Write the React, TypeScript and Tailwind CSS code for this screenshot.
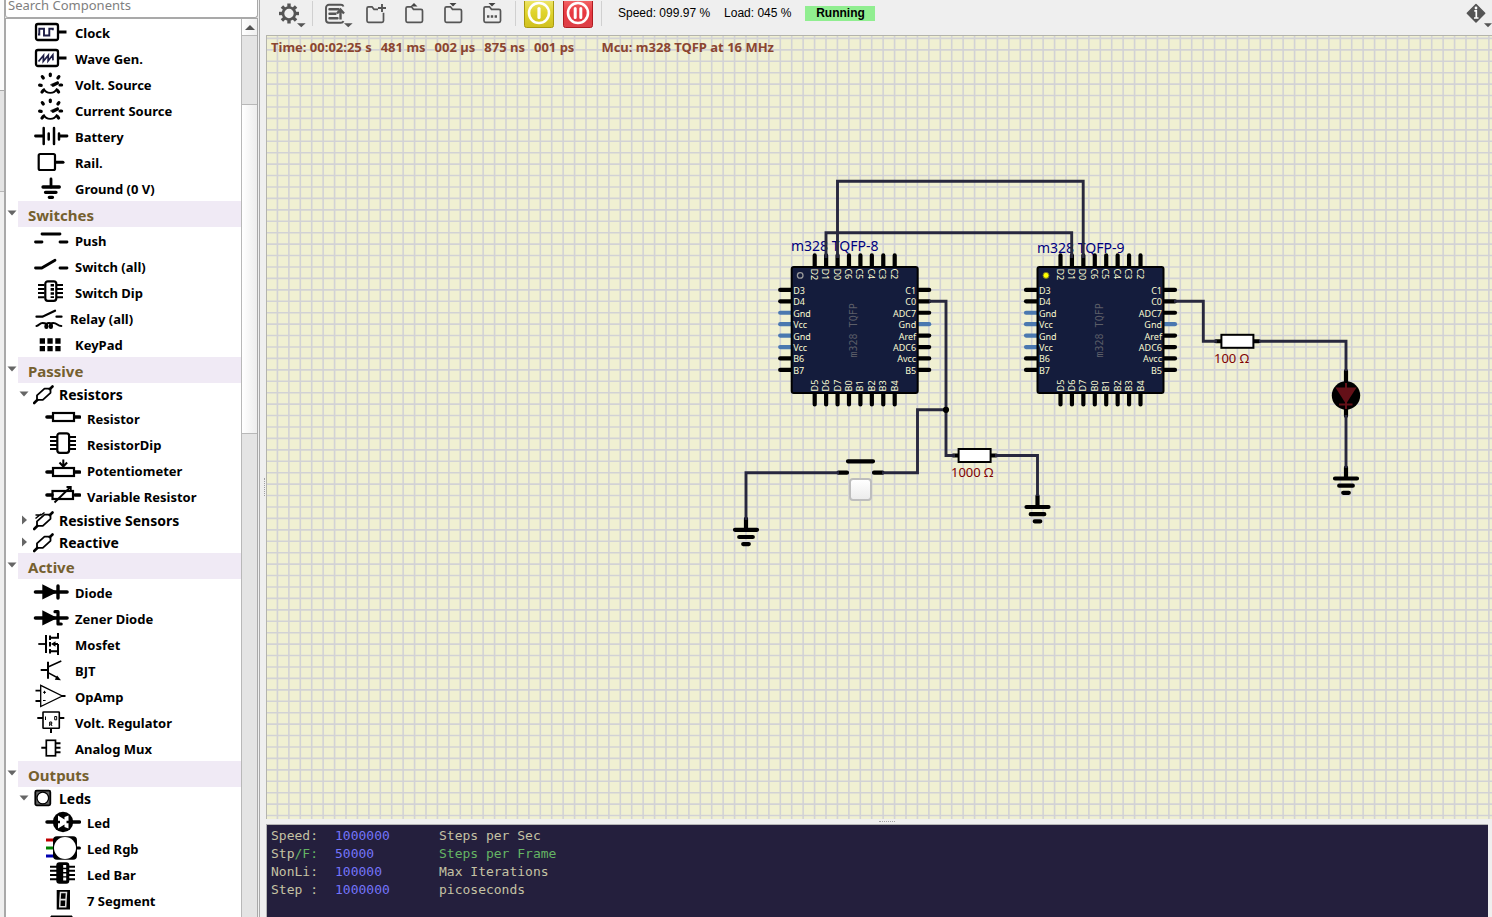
import React, { ReactNode } from "react";

/* ---------- component tree icons ---------- */

const PinLines = ({ xs, ys }: { xs: [number, number]; ys: number[] }) => (
  <path d={ys.map((y) => `M${xs[0]} ${y}H${xs[1]}`).join("")} strokeWidth={2} />
);

const dial = (
  <g>
    <path
      d="M17.3 3v1.6M9.3 5.6l1 1.4M25.9 5.6l-1 1.4M6.6 14.2l1.6.1M27 14h1.6M9 21l1.4-1.6M25.6 21l-1.2-1.6"
      strokeWidth={3.2}
      strokeLinecap="round"
    />
    <path d="M10.5 17.5c1.5 3 4 4.4 6.8 4.4s5.300-1.400 6.800-4.400" strokeWidth={1.8} />
    <path d="M17.500 14.200l8-3.400" stroke="#444" strokeWidth={2} />
    <path d="M20 14.300l4.500-2.200" strokeWidth={3} strokeLinecap="round" />
  </g>
);

const slanted = (
  <g>
    <path d="M1.200 20l3.300-3.200M16.800 6.200l2.700-2.700" strokeWidth={2.600} strokeLinecap="round" />
    <path d="M4 16.800V12.300L11.500 5.600h6V9.800L9.800 16.800z" strokeWidth={1.800} strokeLinejoin="round" />
  </g>
);

const ICONS: Record<string, ReactNode> = {
  clock: (
    <g>
      <rect x="3" y="5" width="22" height="16" rx="2" strokeWidth={2.300} />
      <path d="M25 13h8.500" strokeWidth={3} />
      <path d="M5 15.500h1.300V9.700h4.700v6.800h5.300V9.700h3.500v1.500" stroke="#1c1c44" strokeWidth={1.900} />
    </g>
  ),
  wave: (
    <g>
      <rect x="3" y="5" width="22" height="16" rx="2" strokeWidth={2.300} />
      <path d="M25 13h8.500" strokeWidth={3} />
      <path d="M5.500 16.500l5-6-.2 5.700 5-6-.2 5.700 4.700-6 .2 5.500" stroke="#1c1c44" strokeWidth={1.700} />
    </g>
  ),
  dial,
  battery: (
    <g strokeLinecap="round">
      <path d="M2.500 13H10M27 13h7" strokeWidth={2.800} />
      <path d="M10.700 5v16M21 5v16M15.700 10.500v6M26 10.500v6" strokeWidth={2.500} />
    </g>
  ),
  rail: (
    <g>
      <rect x="5.700" y="5" width="16.300" height="16" rx="1.500" strokeWidth={2.200} />
      <path d="M23 13.300h7" strokeWidth={3} strokeLinecap="round" />
    </g>
  ),
  ground: (
    <g strokeLinecap="round">
      <path d="M18 4v8" strokeWidth={2.800} />
      <path d="M10 12h16.300M12.500 17.300h10.500M16.300 22.300h3.200" strokeWidth={3.300} />
    </g>
  ),
  push: (
    <path d="M9 7h18M2.500 15H9M27 15h7" strokeWidth={2.800} strokeLinecap="round" />
  ),
  switch: (
    <path d="M2.500 15H8.700L22 7.300M27 15h7" strokeWidth={2.800} strokeLinecap="round" />
  ),
  switchDip: (
    <g>
      <PinLines xs={[5, 11.500]} ys={[6, 10, 14, 18.300]} />
      <PinLines xs={[23.500, 30]} ys={[6, 10, 14, 18.300]} />
      <rect x="12.300" y="2.300" width="11" height="19.500" rx="2.500" strokeWidth={2.200} />
      <path d="M19.300 5v14" strokeWidth={3.400} strokeDasharray="2.600 1.500" />
    </g>
  ),
  relay: (
    <g strokeLinecap="round">
      <path d="M3.500 11.700h6L22 5.700M23.500 11.700h5" strokeWidth={2.300} />
      <path
        d="M3.500 21c2.500 0 3-3 6-3s5 .5 5 3.500c0 2-2.200 2-2.200 0 0-2 1.700-3.500 3.700-3.500s3 1.500 3 3.500-2.200 2-2.200 0c0-2 1.500-3.500 3.500-3.500 4 0 4 3 8 3"
        strokeWidth={2.100}
      />
    </g>
  ),
  keypad: (
    <path
      d="M6.700 7.300h5.300v5.400h-5.300zM14.400 7.300h5.300v5.400h-5.300zM22.300 7.300h5.300v5.400h-5.300zM6.700 15h5.300v5.200h-5.300zM14.400 15h5.300v5.200h-5.300zM22.300 15h5.300v5.200h-5.300z"
      fill="#000"
      stroke="none"
    />
  ),
  slanted,
  sensors: (
    <g>
      {slanted}
      <path d="M2.500 6h5.500l3.500-2.500M8 5L2.500 9.500" strokeWidth={1.500} />
    </g>
  ),
  resistor: (
    <g>
      <path d="M2 12h5M30 12h4.500" strokeWidth={3.600} strokeLinecap="round" />
      <rect x="8" y="8" width="21" height="8" strokeWidth={2.200} />
    </g>
  ),
  resistorDip: (
    <g>
      <PinLines xs={[5, 12]} ys={[6, 10, 14, 18]} />
      <PinLines xs={[24, 31]} ys={[6, 10, 14, 18]} />
      <rect x="12.300" y="2.300" width="11.800" height="19.500" rx="2.500" strokeWidth={2.200} />
    </g>
  ),
  pot: (
    <g>
      <path d="M2 15h5M30 15h4.500" strokeWidth={3.600} strokeLinecap="round" />
      <rect x="8" y="11" width="21" height="8" strokeWidth={2.200} />
      <path d="M18.300 2.500v7M14.500 5.500l3.800 4 3.800-4" strokeWidth={2} />
    </g>
  ),
  varRes: (
    <g>
      <path d="M2 12h5M30 12h4.500" strokeWidth={3.600} strokeLinecap="round" />
      <rect x="7.500" y="8" width="20.500" height="8" strokeWidth={2.200} />
      <path d="M9.500 19.500l16-15.500M21.500 4h4.300v4" strokeWidth={1.800} />
    </g>
  ),
  diode: (
    <g>
      <path d="M2.500 13H34" strokeWidth={3.600} strokeLinecap="round" />
      <path d="M9.300 5.300L24.500 13 9.300 20.500z" fill="#000" stroke="none" />
      <path d="M25 7v12" strokeWidth={3.400} strokeLinecap="round" />
    </g>
  ),
  zener: (
    <g>
      <path d="M2.500 13H34" strokeWidth={3.600} strokeLinecap="round" />
      <path d="M9.300 5.300L24.500 13 9.300 20.500z" fill="#000" stroke="none" />
      <path d="M22 6.700h3V19h3.200" strokeWidth={3.200} strokeLinecap="round" strokeLinejoin="round" />
    </g>
  ),
  mosfet: (
    <g>
      <path d="M5.300 13h7.500" strokeWidth={1.800} />
      <path d="M13 4v18M17 4.500v4.500M17 11v4.500M17 18v4.500M17 6.700h8V2M17 20.300h8V24M25 13v7" strokeWidth={2} />
      <path d="M18 13l4.500-2.700v5.400zM22 12h3v2h-3z" fill="#000" stroke="none" />
    </g>
  ),
  bjt: (
    <g>
      <path d="M7.700 13H15M15 4.700v17" strokeWidth={2} />
      <path d="M15 10l13.300-6M15 15.700l10 5.300" strokeWidth={1.500} />
      <path d="M28 23.300l-6.200-.5 2.300-4.300z" fill="#000" stroke="none" />
    </g>
  ),
  opamp: (
    <g>
      <path d="M7.700 2.300v21.200L29.300 13z" strokeWidth={1.300} />
      <path d="M2.500 7.700h5.200M2.500 18h5.200M28 13h4.500" strokeWidth={1.800} />
      <path d="M10 9.300h3M11.500 7.800v3M10 17.500h2.600" strokeWidth={1} />
    </g>
  ),
  vreg: (
    <g>
      <rect x="10" y="3" width="16.300" height="16.300" rx=".5" strokeWidth={1.600} />
      <path d="M4.300 9H10M26 9h5.300M18 19.500v4.500" strokeWidth={2} />
      <path
        d="M12.500 7.500v3.500M21.700 7.500h2v3.300h-2zM16.700 17v-4h2v2h-2M18 15l1 2"
        strokeWidth={1}
      />
    </g>
  ),
  mux: (
    <g>
      <rect x="13.300" y="5.300" width="9.200" height="15.500" strokeWidth={1.700} />
      <path d="M8.300 12.700h5M22.500 8.300h5M22.500 12.700h5M22.500 17.300h5" strokeWidth={2} />
    </g>
  ),
  leds: (
    <g>
      <rect x="2.300" y="3.700" width="15" height="14.600" rx="1.500" fill="#666" strokeWidth={1.800} />
      <circle cx="9.800" cy="11" r="5.800" fill="#fff" strokeWidth={1.300} />
    </g>
  ),
  led: (
    <g>
      <path d="M2 13h32.500" strokeWidth={3.500} strokeLinecap="round" />
      <circle cx="18" cy="13" r="10.200" fill="#000" stroke="none" />
      <path d="M13 6.500l6.500 4V8l4-1.500v13l-4-1.500v-2.500l-6.500 4z" fill="#fff" stroke="none" />
      <path d="M9 13h6" strokeWidth={2.500} />
      <path d="M21.500 13h6" strokeWidth={2.500} />
    </g>
  ),
  rgb: (
    <g>
      <path d="M1 5h8" stroke="#c00000" strokeWidth={3} />
      <path d="M1 13h8" stroke="#008000" strokeWidth={3} />
      <path d="M1 21h8" stroke="#0000b0" strokeWidth={3} />
      <path d="M30 13h4.500" strokeWidth={3} strokeLinecap="round" />
      <rect x="8" y="1.300" width="24" height="23.400" rx="4" fill="#000" stroke="none" />
      <circle cx="20" cy="13" r="11" fill="#fff" stroke="none" />
    </g>
  ),
  ledBar: (
    <g>
      <PinLines xs={[5, 12]} ys={[5.700, 9.700, 14, 18.300]} />
      <PinLines xs={[24, 30]} ys={[5.700, 9.700, 14, 18.300]} />
      <rect x="11.300" y="1.300" width="13" height="21.400" rx="3" fill="#000" stroke="none" />
      <path d="M19.700 4v16" stroke="#fff" strokeWidth={3} strokeDasharray="2.800 1.400" />
    </g>
  ),
  seg7: (
    <g>
      <rect x="11.700" y="3" width="13.300" height="19.500" fill="#000" stroke="none" />
      <path d="M15.500 5.500h6l-.5 7h-6zM15 12.700h6l-.3 7h-6z" stroke="#ddd" strokeWidth={1.500} />
    </g>
  ),
  cut: <path d="M6 3h21v16H6z" fill="#000" />,
};

const Icon = ({ name, narrow }: { name: string; narrow?: boolean }) => (
  <svg
    className={narrow ? "h-[22px] w-[21px] shrink-0" : "h-[26px] w-9 shrink-0"}
    viewBox={narrow ? "0 0 21 22" : "0 0 36 26"}
    fill="none"
    stroke="#000"
    aria-hidden="true"
  >
    {ICONS[name]}
  </svg>
);

/* ---------- sidebar tree ---------- */

const Arrow = ({ open }: { open: boolean }) => (
  <svg className="h-[10px] w-[10px] shrink-0" viewBox="0 0 10 10" aria-hidden="true">
    <path d={open ? "M.5 2.500h9L5 7.500z" : "M3 .5v9L8 5z"} fill="#666" />
  </svg>
);

const Item = ({ icon, label, nested, tight }: { icon: string; label: string; nested?: boolean; tight?: boolean }) => (
  <li>
    <button
      type="button"
      aria-label={label || "More"}
      className={`flex h-[26px] w-full items-center text-left text-[13px] font-bold whitespace-nowrap text-black ${
        nested ? "pl-[39px]" : "pl-[27px]"
      } ${tight ? "gap-px" : "gap-[6px]"}`}
    >
      <Icon name={icon} />
      <span className="pt-[3px]">{label}</span>
    </button>
  </li>
);

const Category = ({ label, children }: { label: string; children: ReactNode }) => (
  <li>
    <button type="button" className="flex h-[26px] w-full items-center text-left">
      <span className="flex w-3 items-center pb-[2px] pl-px">
        <Arrow open />
      </span>
      <span className="flex h-full flex-1 items-center bg-[#f0eaf5] pt-[3px] pl-[10px] text-[15px] font-bold text-[#75602f]">
        {label}
      </span>
    </button>
    <ul>{children}</ul>
  </li>
);

const Group = ({ icon, label, open, children }: { icon: string; label: string; open?: boolean; children?: ReactNode }) => (
  <li>
    <button type="button" className="flex h-[22px] w-full items-center pl-[13px] text-left">
      <Arrow open={!!open} />
      <span className="flex w-[30px] pl-1">
        <Icon name={icon} narrow />
      </span>
      <span className="pt-[2px] text-[14px] leading-5 font-bold whitespace-nowrap text-black">{label}</span>
    </button>
    {children && <ul>{children}</ul>}
  </li>
);

const Sidebar = () => (
  <aside className="flex h-full w-[260px] shrink-0 border-r border-[#a9a9a9]">
    <div className="flex w-[5px] shrink-0 flex-col border-r border-[#a9a9a9]">
      <div className="h-[91px] border-b border-[#a9a9a9] bg-[#fbfbfb]" />
      <div className="h-[101px] border-b border-[#b8b8b8] bg-[#e4e4e4]" />
    </div>
    <div className="flex min-w-0 flex-1 flex-col pr-px">
      <input
        type="text"
        aria-label="Search Components"
        placeholder="Search Components"
        className="h-[18px] shrink-0 rounded-b-[3px] border border-t-0 border-[#a9a9a9] bg-white px-[2px] pb-[6px] text-[13px] text-black outline-none placeholder:text-[#808080]"
      />
      <div className="flex min-h-0 flex-1 border-x border-t border-[#a9a9a9]">
        <nav aria-label="Components" className="min-w-0 flex-1 overflow-hidden bg-white">
          <ul>
            <Item icon="clock" label="Clock" />
            <Item icon="wave" label="Wave Gen." />
            <Item icon="dial" label="Volt. Source" />
            <Item icon="dial" label="Current Source" />
            <Item icon="battery" label="Battery" />
            <Item icon="rail" label="Rail." />
            <Item icon="ground" label="Ground (0 V)" />
            <Category label="Switches">
              <Item icon="push" label="Push" />
              <Item icon="switch" label="Switch (all)" />
              <Item icon="switchDip" label="Switch Dip" />
              <Item icon="relay" label="Relay (all)" tight />
              <Item icon="keypad" label="KeyPad" />
            </Category>
            <Category label="Passive">
              <Group icon="slanted" label="Resistors" open>
                <Item nested icon="resistor" label="Resistor" />
                <Item nested icon="resistorDip" label="ResistorDip" />
                <Item nested icon="pot" label="Potentiometer" />
                <Item nested icon="varRes" label="Variable Resistor" />
              </Group>
              <Group icon="sensors" label="Resistive Sensors" />
              <Group icon="slanted" label="Reactive" />
            </Category>
            <Category label="Active">
              <Item icon="diode" label="Diode" />
              <Item icon="zener" label="Zener Diode" />
              <Item icon="mosfet" label="Mosfet" />
              <Item icon="bjt" label="BJT" />
              <Item icon="opamp" label="OpAmp" />
              <Item icon="vreg" label="Volt. Regulator" />
              <Item icon="mux" label="Analog Mux" />
            </Category>
            <Category label="Outputs">
              <Group icon="leds" label="Leds" open>
                <Item nested icon="led" label="Led" />
                <Item nested icon="rgb" label="Led Rgb" />
                <Item nested icon="ledBar" label="Led Bar" />
                <Item nested icon="seg7" label="7 Segment" />
                <Item nested icon="cut" label="" />
              </Group>
            </Category>
          </ul>
        </nav>
        <div className="flex w-4 shrink-0 flex-col border-l border-[#b8b8b8] bg-[#e4e4e4]">
          <button type="button" aria-label="Scroll up" className="flex h-[17px] shrink-0 items-center justify-center border-b border-[#b8b8b8] bg-gradient-to-r from-white to-[#f0f0f0]">
            <svg className="h-[5px] w-[10px]" viewBox="0 0 10 5" aria-hidden="true">
              <path d="M0 5h10L5 0z" fill="#555" />
            </svg>
          </button>
          <div className="h-[68px] shrink-0" />
          <div className="h-[330px] shrink-0 border-y border-[#b8b8b8] bg-gradient-to-r from-white to-[#ededed]" />
        </div>
      </div>
    </div>
  </aside>
);

/* ---------- toolbar ---------- */

const Tool = ({ label, x, children }: { label: string; x: number; children: ReactNode }) => (
  <button type="button" aria-label={label} className="h-[34px] w-[39px] shrink-0">
    <svg className="block h-[34px] w-[39px]" viewBox={`${x} 0 39 34`} fill="none" stroke="#555" aria-hidden="true">
      {children}
    </svg>
  </button>
);

const Separator = () => <span className="mb-[9px] h-[25px] w-px shrink-0 bg-[#d0d0d0]" />;

const Folder = ({ x, children }: { x: number; children?: ReactNode }) => (
  <g transform={`translate(${x} 0)`}>
    <path
      d="M-6.500 5.800h4l2 2.500h7.500a1.500 1.500 0 0 1 1.500 1.500v10a1.500 1.500 0 0 1-1.500 1.500h-13.500a1.500 1.500 0 0 1-1.500-1.500v-12.500a1.500 1.500 0 0 1 1.500-1.500z"
      strokeWidth={1.700}
    />
    {children}
  </g>
);

const GearTeeth = () => (
  <g>
    {[0, 45, 90, 135, 180, 225, 270, 315].map((a) => (
      <rect key={a} x="287.300" y="2.500" width="3.400" height="4.500" fill="#555" stroke="none" transform={`rotate(${a} 289 12.500)`} />
    ))}
  </g>
);

const Toolbar = () => (
  <header className="flex h-[35px] shrink-0 items-center overflow-hidden pl-[10px]">
    <Tool label="Settings" x={270}>
      <GearTeeth />
      <circle cx="289" cy="12.500" r="6" strokeWidth={2.600} />
      <path d="M297 22.300h8.600l-4.300 4z" fill="#555" stroke="none" />
    </Tool>
    <span className="flex w-[6px] justify-center"><Separator /></span>
    <Tool label="Recent circuits" x={315}>
      <path d="M343.500 5.500c-.5-1.300-1.300-1.700-2.500-1.700h-12a3 3 0 0 0-3 3v12a3 3 0 0 0 3 3h12c1.200 0 2-.6 2.500-1.700" strokeWidth={1.900} />
      <path d="M329.500 8.300h9M329.500 12.700h6M329.500 17.300h8" strokeWidth={2.400} strokeLinecap="round" />
      <path d="M340.500 18.500v-8M337 12.500l3.500-4 3.500 4" strokeWidth={2.400} />
      <path d="M344 22.300h8.600l-4.300 4z" fill="#555" stroke="none" />
    </Tool>
    <Tool label="New circuit" x={354}>
      <path d="M378 8.300h-4l-2-2.500h-3.500a1.500 1.500 0 0 0-1.500 1.500v12.500a1.500 1.500 0 0 0 1.500 1.500h13.500a1.500 1.500 0 0 0 1.500-1.500v-8" strokeWidth={1.700} />
      <path d="M382 3v8M378 7h8" strokeWidth={1.900} />
    </Tool>
    <Tool label="Open circuit" x={393}>
      <Folder x={414}>
        <path d="M-3.500 5.500L0 2l3.500 3.500z" fill="#444" stroke="none" />
      </Folder>
    </Tool>
    <Tool label="Save circuit" x={432}>
      <Folder x={453}>
        <path d="M-3.500 2L0 5.500 3.500 2z" fill="#444" stroke="none" />
      </Folder>
    </Tool>
    <Tool label="Save circuit as" x={471}>
      <Folder x={492}>
        <path d="M-3.500 2L0 5.500 3.500 2z" fill="#444" stroke="none" />
        <path d="M-5 15.500h10" strokeWidth={2.600} strokeDasharray="2.400 1.400" />
      </Folder>
    </Tool>
    <span className="flex w-[10px] justify-center"><Separator /></span>
    <Tool label="Power circuit" x={520}>
      <defs>
        <linearGradient id="yellow" x1="0" y1="0" x2="0" y2="1">
          <stop offset="0" stopColor="#f0e878" />
          <stop offset=".5" stopColor="#e0d42c" />
          <stop offset="1" stopColor="#d0c020" />
        </linearGradient>
      </defs>
      <rect x="524.500" y="-3.500" width="29" height="30" rx="2" fill="url(#yellow)" stroke="#a89a10" />
      <circle cx="539" cy="12" r="10" stroke="#fff" strokeWidth={2.600} />
      <path d="M539 7.500v9" stroke="#fff" strokeWidth={3.200} strokeLinecap="round" />
    </Tool>
    <Tool label="Pause simulation" x={559}>
      <defs>
        <linearGradient id="red" x1="0" y1="0" x2="0" y2="1">
          <stop offset="0" stopColor="#f47070" />
          <stop offset=".5" stopColor="#e83840" />
          <stop offset="1" stopColor="#dc4048" />
        </linearGradient>
      </defs>
      <rect x="563.500" y="-3.500" width="29" height="30" rx="2" fill="url(#red)" stroke="#b01c20" />
      <circle cx="578" cy="12" r="10" stroke="#fff" strokeWidth={2.600} />
      <path d="M575.200 7.500v9M580.800 7.500v9" stroke="#fff" strokeWidth={3} strokeLinecap="round" />
    </Tool>
    <span className="flex w-[6px] justify-center"><Separator /></span>
    <p className="mb-[9px] ml-[14px] flex items-center gap-[14px] font-['Liberation_Sans',Arial,sans-serif] text-[12px] leading-[15px] whitespace-pre text-black">
      <span>Speed: 099.97 %</span>
      <span>Load: 045 %</span>
      <strong className="w-[70px] bg-[#90ee90] text-center font-bold">Running</strong>
    </p>
    <button type="button" aria-label="About" className="ml-auto h-[34px] w-[30px] shrink-0">
      <svg className="block h-[34px] w-[30px]" viewBox="1462 0 30 34" aria-hidden="true">
        <path d="M1476 3.500l8.700 8.700-8.700 8.700-8.700-8.700z" fill="#555" stroke="#555" strokeWidth={1.500} strokeLinejoin="round" />
        <path d="M1474.300 9.800h2v7M1474 17h4.500" stroke="#fff" strokeWidth={1.700} fill="none" />
        <circle cx="1476" cy="7" r="1.400" fill="#fff" />
        <path d="M1484 22.300h8l-4 4z" fill="#555" />
      </svg>
    </button>
  </header>
);

/* ---------- circuit canvas ---------- */

const STEP = 80 / 7;
const range = (n: number) => Array.from({ length: n }, (_, i) => i);

const gridPath =
  range(260).map((i) => `M${(746 + (i - 43) * STEP).toFixed(2)} 0V2400`).join("") +
  range(200).map((i) => `M260 ${(472.7 + (i - 39) * STEP).toFixed(2)}H3200`).join("");

const LEFT = ["D3", "D4", "Gnd", "Vcc", "Gnd", "Vcc", "B6", "B7"];
const RIGHT = ["C1", "C0", "ADC7", "Gnd", "Aref", "ADC6", "Avcc", "B5"];
const TOP = ["D2", "D1", "D0", "C6", "C5", "C4", "C3", "C2"];
const BOTTOM = ["D5", "D6", "D7", "B0", "B1", "B2", "B3", "B4"];

const pinColor = (label: string) => (label === "Gnd" || label === "Vcc" ? "#4a78b0" : "#000");

const Chip = ({ x, y, lit }: { x: number; y: number; lit?: boolean }) => (
  <g transform={`translate(${x} ${y})`}>
    <g strokeWidth={4.200} strokeLinecap="round">
      {range(8).map((i) => {
        const p = 23.500 + i * STEP;
        return (
          <g key={i}>
            <path d={`M-11 ${p}H0`} stroke={pinColor(LEFT[i])} />
            <path d={`M127 ${p}H138`} stroke={pinColor(RIGHT[i])} />
            <path d={`M${p} -11V0M${p} 127V138`} stroke="#000" />
          </g>
        );
      })}
    </g>
    <rect x=".5" y=".5" width="126" height="126" rx="2" fill="#141c3c" stroke="#000" strokeWidth={2} />
    {lit ? (
      <circle cx="9" cy="9" r="3" fill="#ff0" stroke="#777722" strokeWidth={1} />
    ) : (
      <circle cx="9" cy="9" r="2.800" fill="none" stroke="#999" strokeWidth={1.300} />
    )}
    <g fill="#fafad2" className="font-['Noto_Sans','Open_Sans',sans-serif] text-[9px]">
      {range(8).map((i) => {
        const p = 23.500 + i * STEP;
        return (
          <g key={i}>
            <text x="2" y={p + 4}>{LEFT[i]}</text>
            <text x="125" y={p + 4} textAnchor="end">{RIGHT[i]}</text>
            <text transform={`translate(${p - 4} 2) rotate(90)`}>{TOP[i]}</text>
            <text transform={`translate(${p + 3} 125) rotate(-90)`}>{BOTTOM[i]}</text>
          </g>
        );
      })}
    </g>
    <text
      transform="translate(66 64) rotate(-90)"
      textAnchor="middle"
      fill="#5c5e68"
      className="font-['DejaVu_Sans_Mono',monospace] text-[10px]"
    >
      m328 TQFP
    </text>
  </g>
);

const Ground = ({ x, y }: { x: number; y: number }) => (
  <g transform={`translate(${x} ${y})`} stroke="#000" strokeWidth={4.200} strokeLinecap="round">
    <path d="M0 -11V0M-11 0H11M-6.800 7.200H6.800M-2.800 14.300H2.800" />
  </g>
);

const Resistor = ({ x, y }: { x: number; y: number }) => (
  <g transform={`translate(${x} ${y})`} stroke="#000">
    <path d="M-21.500 0H21.500" strokeWidth={4} strokeLinecap="round" />
    <rect x="-16" y="-6.500" width="32" height="13" fill="#fff" strokeWidth={2} />
  </g>
);

const Circuit = () => (
  <svg className="block h-full w-full" role="img" aria-label="Circuit">
    <g transform="translate(-267 -36)">
      <path d={gridPath} stroke="#d2d2d5" strokeWidth={1.600} fill="none" />

      <g fill="#00007f" className="font-['Noto_Sans','Open_Sans',sans-serif] text-[14px]">
        <text x="791" y="251">m328 TQFP-8</text>
        <text x="1037" y="253">m328 TQFP-9</text>
      </g>

      <Chip x={791.200} y={266.400} />
      <Chip x={1037} y={266.400} lit />

      <Resistor x={974.600} y={455.500} />
      <Resistor x={1237.400} y={341.300} />
      <Ground x={746} y={529.800} />
      <Ground x={1037.500} y={507} />
      <Ground x={1346} y={478.500} />

      <g stroke="#000" strokeWidth={4.200} strokeLinecap="round">
        <path d="M848 461.300H873M838.500 472.700H847M874 472.700H882.500" />
        <path d="M1346 371V383M1346 408V416" />
      </g>

      <circle cx="1346" cy="395.500" r="14.200" fill="#000" />
      <path d="M1335.500 387.500h21l-10.500 16.500z" fill="#641018" />
      <path d="M1346 383v26M1339 404.500h13.500" stroke="#641018" strokeWidth={2} />

      <g fill="none" stroke="#28283e" strokeWidth={2.900}>
        <path d="M837.500 258V181.300H1083.200V258" />
        <path d="M826 258V232.700H1071.700V258" />
        <path d="M929 301.200H946V455.500H955" />
        <path d="M946 409.800H917.500V472.700H882" />
        <path d="M839 472.700H746V520" />
        <path d="M995 455.500H1037.500V496" />
        <path d="M1174 301.200H1203.300V341.300H1217" />
        <path d="M1259 341.300H1346V371" />
        <path d="M1346 415V468" />
      </g>
      <circle cx="946" cy="409.800" r="3.100" fill="#000" />

      <g fill="#800000" className="font-['Noto_Sans','Open_Sans',sans-serif] text-[13px]">
        <text x="951" y="477">1000 Ω</text>
        <text x="1214" y="363">100 Ω</text>
      </g>
    </g>
  </svg>
);

const TIME = ["Time: 00:02:25 s", "481 ms", "002 µs", "875 ns", "001 ps"];

const Canvas = () => (
  <main className="relative min-h-0 flex-1 overflow-hidden border-t border-l border-[#b4b4ac] bg-[#f0f0d2]">
    <Circuit />
    <p className="absolute top-px left-1 flex gap-[27px] text-[13px] leading-5 font-bold whitespace-nowrap text-[#8b4530]">
      <span className="flex gap-[9px]">
        {TIME.map((part) => (
          <span key={part}>{part}</span>
        ))}
      </span>
      <span>Mcu: m328 TQFP at 16 MHz</span>
    </p>
    <button
      type="button"
      aria-label="Push switch"
      className="absolute top-[442px] left-[582px] size-[23px] rounded-[4px] border-2 border-[#bdbdbd] bg-gradient-to-b from-white to-[#ececec]"
    />
  </main>
);

/* ---------- console ---------- */

const SETTINGS = [
  { key: "Speed:", value: "1000000", note: "Steps per Sec" },
  { key: "Stp/F:", value: "50000", note: "Steps per Frame" },
  { key: "NonLi:", value: "100000", note: "Max Iterations" },
  { key: "Step :", value: "1000000", note: "picoseconds" },
];

const Console = () => (
  <section
    aria-label="Simulation settings"
    className="mr-1 h-[93px] shrink-0 overflow-hidden border-t border-l border-[#b4b4b4] bg-[#241f3d] pt-[2px] pl-1"
  >
    <table className="font-['DejaVu_Sans_Mono',monospace] text-[13px] leading-[18px] text-[#c4c2a4]">
      <tbody>
        {SETTINGS.map(({ key, value, note }, i) => (
          <tr key={key}>
            <th scope="row" className="w-16 p-0 text-left font-normal">
              {i === 1 ? (
                <>
                  Stp<span className="text-[#64b464]">/F:</span>
                </>
              ) : (
                key
              )}
            </th>
            <td className="w-[104px] p-0 text-[#7474fa]">{value}</td>
            <td className={i === 1 ? "p-0 text-[#64b464]" : "p-0"}>{note}</td>
          </tr>
        ))}
      </tbody>
    </table>
  </section>
);

export default function App() {
  return (
    <div className="flex h-screen overflow-hidden bg-[#efefef] font-['Noto_Sans','Open_Sans',sans-serif]">
      <Sidebar />
      <div className="flex min-w-0 flex-1 flex-col">
        <Toolbar />
        <div className="flex min-h-0 flex-1">
          <div className="flex w-[6px] shrink-0 flex-col items-end pt-[443px] pr-px">
            <span className="h-[18px] border-l border-dotted border-[#a0a0a0]" />
          </div>
          <div className="flex min-w-0 flex-1 flex-col">
            <Canvas />
            <div className="flex h-[5px] shrink-0 items-center justify-center pl-4">
              <span className="w-4 border-t border-dotted border-[#a0a0a0]" />
            </div>
            <Console />
          </div>
        </div>
      </div>
    </div>
  );
}
